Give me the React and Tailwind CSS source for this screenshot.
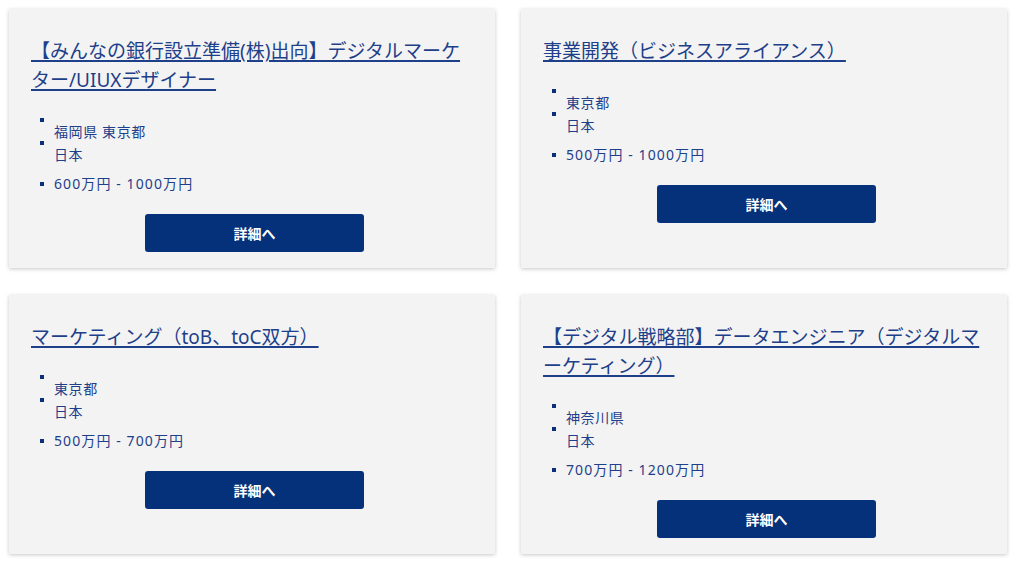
import React from "react";

const jobs = [
  {
    title: "【みんなの銀行設立準備(株)出向】デジタルマーケター/UIUXデザイナー",
    place: "福岡県 東京都",
    country: "日本",
    salary: "600万円 - 1000万円",
  },
  {
    title: "事業開発（ビジネスアライアンス）",
    place: "東京都",
    country: "日本",
    salary: "500万円 - 1000万円",
  },
  {
    title: "マーケティング（toB、toC双方）",
    place: "東京都",
    country: "日本",
    salary: "500万円 - 700万円",
  },
  {
    title: "【デジタル戦略部】データエンジニア（デジタルマーケティング）",
    place: "神奈川県",
    country: "日本",
    salary: "700万円 - 1200万円",
  },
];

const Bullet = () => (
  <span className="block w-[23px] shrink-0 pl-[9px]">
    <span className="block w-[4px] h-[4px] bg-[#0b2f78]" />
  </span>
);

const JobCard = ({ job }) => (
  <div className="bg-[#f3f3f3] shadow-[0_1px_4px_rgba(0,0,0,0.22)] pt-[28px] px-[22px] pb-[16px] flex flex-col">
    {/* Title */}
    <h3 className="text-[19px] leading-[29px] font-normal text-[#1e3f8a] [line-break:loose]">
      <a
        href="#"
        className="underline decoration-[1.5px] underline-offset-[2px]"
      >
        {job.title}
      </a>
    </h3>

    {/* Details */}
    <ul className="mt-[23px] text-[14px] text-[#1e3f8a] tracking-[0.6px]">
      <li className="flex items-start h-[23px]">
        <Bullet />
        <span className="block leading-[23px] mt-[2px] whitespace-nowrap">
          {job.place}
        </span>
      </li>
      <li className="flex items-start h-[23px]">
        <Bullet />
        <span className="block leading-[23px] mt-[2px]">{job.country}</span>
      </li>
      <li className="flex items-center h-[23px] mt-[8px]">
        <Bullet />
        <span className="leading-[23px] tracking-[1.1px] whitespace-pre">
          {job.salary}
        </span>
      </li>
    </ul>

    {/* Button */}
    <button className="mt-[19px] ml-[114px] w-[219px] h-[38px] rounded-[3px] bg-[#05307a] text-white text-[14px] font-bold">
      詳細へ
    </button>
  </div>
);

const App = () => {
  return (
    <div
      className="bg-white min-h-screen pl-[9px] pr-[17px] pt-[9px] pb-[16px]"
      style={{ fontFamily: '"Noto Sans", "Noto Sans CJK JP", sans-serif' }}
      lang="ja"
    >
      <div className="grid grid-cols-2 gap-x-[26px] gap-y-[27px]">
        {jobs.map((job) => (
          <JobCard key={job.title} job={job} />
        ))}
      </div>
    </div>
  );
};

export default App;
